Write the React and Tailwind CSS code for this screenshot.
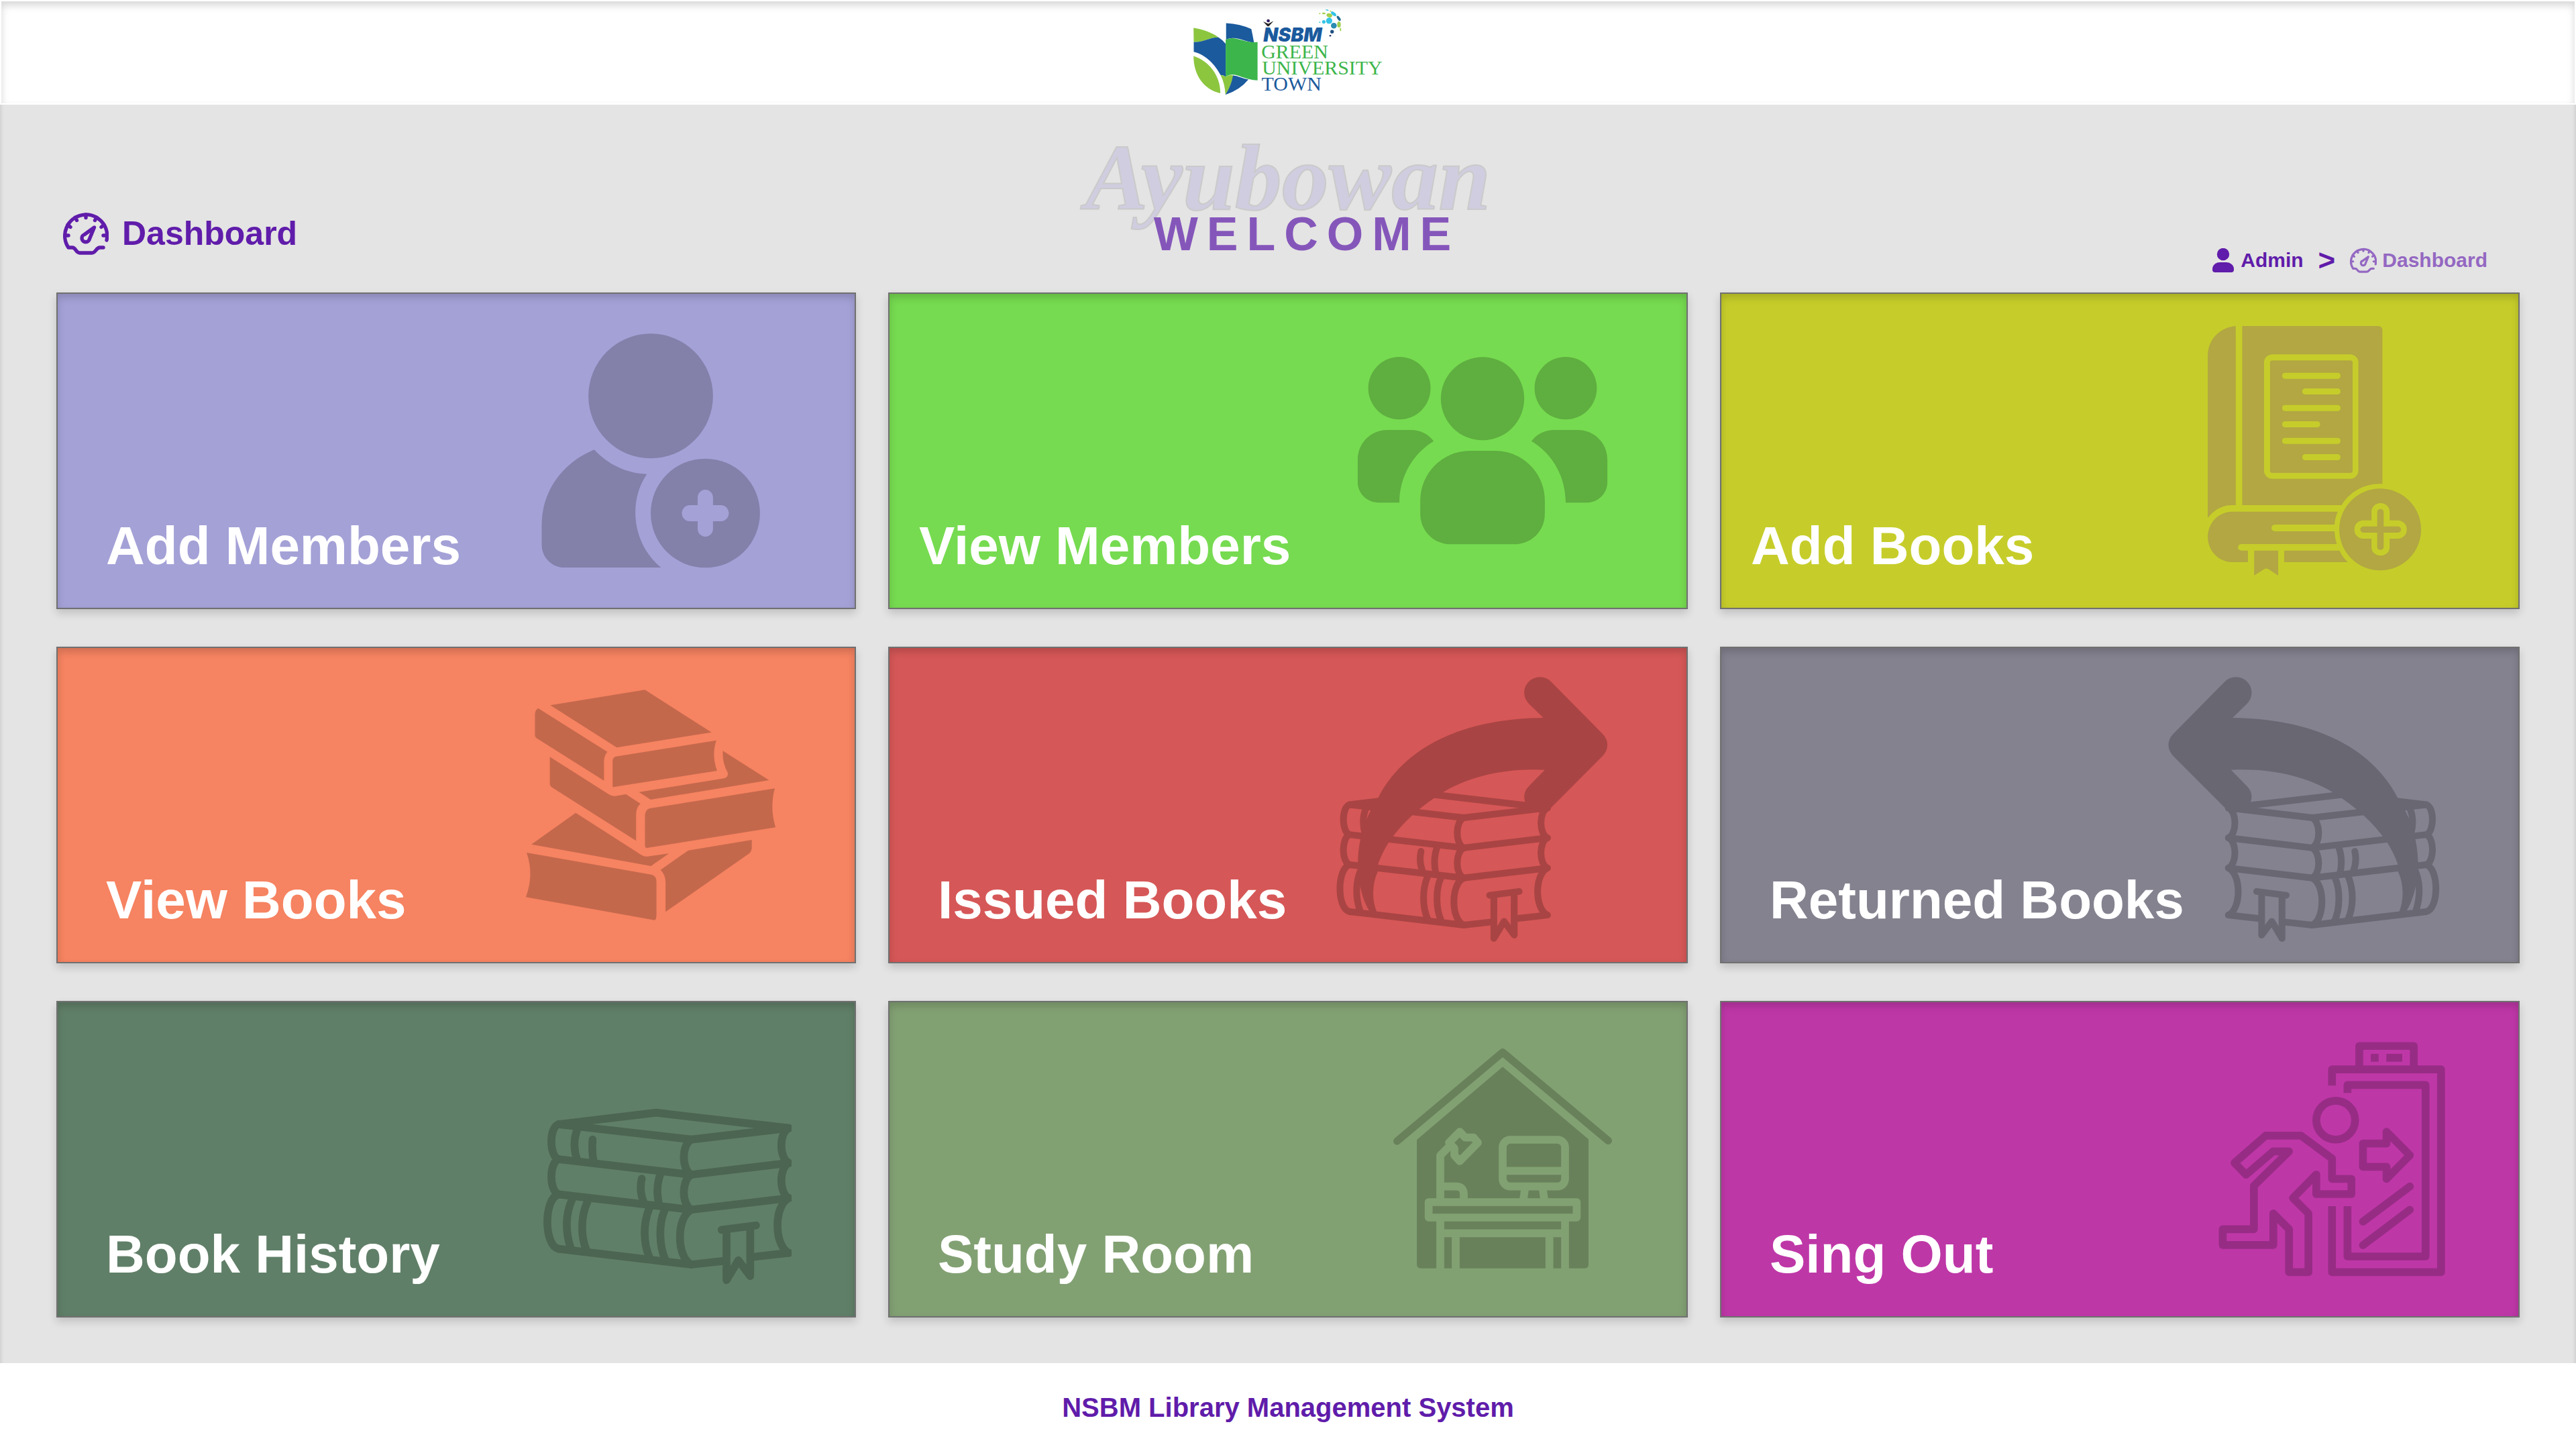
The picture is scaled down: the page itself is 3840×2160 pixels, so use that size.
const GaugeIcon = ({ className }) => (
  <svg
    viewBox="0 0 68 64"
    className={className}
    fill="none"
    stroke="currentColor"
    strokeWidth="5.4"
    strokeLinecap="round"
    strokeLinejoin="round"
    aria-hidden="true"
  >
    <path d="M65 42A31.5 31.5 0 1 0 8 53H14C19 53 19 61 25 61H43C49 61 49 53 55 53H60" />
    <path d="M34 4V8.500M4 35H8M64 35H60M18 8L20.500 12.500M50 8L47.500 12.500M7 19L11 22.500M61 19L57 22.500" />
    <path d="M46.500 23L32 33.500A5.800 5.800 0 1 0 39.500 40Z" />
  </svg>
);

const UserIcon = ({ className }) => (
  <svg viewBox="0 0 32 36" className={className} fill="currentColor" aria-hidden="true">
    <circle cx="16" cy="9" r="9.200" />
    <path d="M11 21H21A11 10 0 0 1 32 31V32Q32 36 28 36H4Q0 36 0 32V31A11 10 0 0 1 11 21Z" />
  </svg>
);

const Logo = () => (
  <svg viewBox="100 30 880 400" className="h-[133px] w-[293px]" role="img" aria-label="NSBM Green University Town">
    <path fill="#8cc63f" d="M115 119C160 125 200 142 228 162C190 160 165 183 116 183Z" />
    <path fill="#1b5a9d" d="M116 183C165 183 190 160 228 162Q245 172 259 190V338Q250 330 236 330C215 290 175 240 116 226Z" />
    <path fill="#8cc63f" d="M115 245C180 265 236 330 235 412C160 395 115 330 115 245Z" />
    <path fill="#1b5a9d" d="M261 98Q325 102 374 124Q380 150 386 185C350 183 300 150 261 172Z" />
    <path fill="#8cc63f" d="M236 330Q250 332 259 338Q275 328 294 332Q285 375 258 419Q256 370 236 330Z" />
    <path fill="#1b5a9d" d="M292 332C320 335 330 345 361 350Q325 395 258 419Q285 375 292 332Z" />
    <path fill="#3cb54b" d="M259 172C300 150 340 187 402 183V354C340 355 300 310 259 338Z" />
    <path fill="#222" d="M427 90L447 112H452L474 88L450 101Z" />
    <circle fill="#2e1a5e" cx="450" cy="87" r="7" />
    <g fill="#35c4e8">
      <circle cx="723" cy="87" r="14" />
      <circle cx="699" cy="92" r="8" />
      <circle cx="681" cy="94" r="3" />
      <ellipse cx="743" cy="56" rx="14" ry="7" transform="rotate(38 743 56)" />
      <ellipse cx="714" cy="39" rx="7" ry="2" transform="rotate(15 714 39)" />
    </g>
    <g fill="#a2cf4f">
      <ellipse cx="724" cy="63" rx="13" ry="9" transform="rotate(15 724 63)" />
      <ellipse cx="699" cy="54" rx="8" ry="4" />
      <circle cx="681" cy="55" r="3" />
      <ellipse cx="767" cy="104" rx="8" ry="14" />
      <ellipse cx="774" cy="126" rx="3" ry="8" />
      <ellipse cx="729" cy="44" rx="5" ry="2" transform="rotate(20 729 44)" />
    </g>
    <circle fill="#2a8cb0" cx="744" cy="109" r="13" />
    <ellipse fill="#236a90" cx="766" cy="76" rx="6" ry="13" transform="rotate(-35 766 76)" />
    <circle fill="#1f4f80" cx="736" cy="136" r="8" />
    <circle fill="#1f2f60" cx="728" cy="154" r="4" />
    <text x="428" y="180" fill="#1b5a9d" className="font-['Inter'] text-[86px] font-black italic">NSBM</text>
    <g className="font-['Liberation_Serif'] text-[90px]">
      <text x="419" y="255" fill="#3cb54b">GREEN</text>
      <text x="422" y="327" fill="#3cb54b">UNIVERSITY</text>
      <text x="420" y="400" fill="#1b5a9d">TOWN</text>
    </g>
  </svg>
);

const AddMemberArt = () => (
  <g transform="translate(26 22) scale(.35714 .33333)" fill="#8380aa">
    <ellipse cx="588" cy="391" rx="260" ry="279" />
    <path d="M352 631C410 698 490 738 572 740C540 790 524 850 524 912C524 1010 565 1100 631 1158H228C175 1158 133 1112 133 1055V970C133 815 220 690 352 631Z" />
    <ellipse cx="816" cy="915" rx="228" ry="244" />
    <g fill="#a4a1d7">
      <rect x="784" y="810" width="64" height="210" rx="32" ry="35" />
      <rect x="718" y="879" width="196" height="72" rx="33" ry="36" />
    </g>
  </g>
);

const MembersArt = () => (
  <g transform="translate(-14 42) scale(.35714 .33333)" fill="#5fae40">
    <ellipse cx="353" cy="296" rx="130" ry="140" />
    <ellipse cx="700" cy="343" rx="174" ry="186" />
    <ellipse cx="1047" cy="296" rx="130" ry="140" />
    <path d="M302 483H404C440 483 475 502 496 533C410 588 353 690 353 808H267C218 808 179 767 179 717V615C179 540 235 483 302 483Z" />
    <path transform="translate(1400 0) scale(-1 1)" d="M302 483H404C440 483 475 502 496 533C410 588 353 690 353 808H267C218 808 179 767 179 717V615C179 540 235 483 302 483Z" />
    <path d="M648 576H752C867 576 960 675 960 800V857C960 933 905 994 832 994H568C495 994 440 933 440 857V800C440 675 533 576 648 576Z" />
  </g>
);

const AddBookArt = () => (
  <g transform="translate(6 12) scale(.3699 .33333)" fill="#b2a742">
    <path d="M305 108V909H290C250 909 215 932 192 967V240C192 165 245 112 305 108Z" />
    <path d="M331 108H880Q896 110 896 126V814H886C820 814 762 852 732 909H331Z" />
    <g fill="#c6cd2a">
      <rect x="419" y="235" width="380" height="556" rx="34" ry="36" />
    </g>
    <rect x="443" y="262" width="333" height="503" rx="10" />
    <g fill="#c6cd2a">
      <rect x="492" y="317" width="235" height="27" rx="12" />
      <rect x="573" y="387" width="154" height="27" rx="12" />
      <rect x="492" y="461" width="235" height="27" rx="12" />
      <rect x="492" y="534" width="153" height="27" rx="12" />
      <rect x="492" y="608" width="235" height="27" rx="12" />
      <rect x="573" y="681" width="154" height="27" rx="12" />
    </g>
    <path d="M290 938H716Q705 965 703 996H463Q449 998 449 1011Q449 1024 463 1026H703Q704 1055 712 1083H328Q314 1085 314 1098Q314 1110 328 1112H354V1164H290C235 1164 192 1112 192 1051S235 938 290 938Z" />
    <path d="M500 1112H723Q735 1142 757 1164H500Z" />
    <path d="M379 1112H476V1224L436 1195Q428 1190 420 1195L379 1224Z" />
    <ellipse cx="887" cy="1018" rx="165" ry="183" />
    <g fill="#c6cd2a">
      <rect x="852" y="900" width="73" height="235" rx="36" ry="38" />
      <rect x="783" y="977" width="211" height="82" rx="36" ry="40" />
    </g>
    <rect x="875" y="926" width="26" height="183" rx="13" />
    <rect x="807" y="1004" width="164" height="28" rx="13" />
  </g>
);

const BookPileArt = () => (
  <g transform="translate(6 14) scale(.35714 .33333)" fill="#c4684c">
    <path d="M225 214L620 145L898 335L502 403Z" />
    <path d="M174 227L463 422Q449 440 449 465V551L166 360Q161 355 161 348V250Q163 235 174 227Z" />
    <path d="M498 443L918 371Q897 435 921 507L487 580Q485 579 485 575V460Q487 446 498 443Z" />
    <path d="M223 445L470 613Q482 621 495 620L541 612L601 654Q583 672 583 702V820L234 583Q223 575 223 565Z" />
    <path d="M945 418L1138 549L644 636L595 602L950 541Q968 535 966 517Q942 470 945 418Z" />
    <path d="M640 675L1162 586Q1140 670 1165 760L628 852Q620 851 620 842V705Q622 680 640 675Z" />
    <path d="M331 695L606 884Q617 892 630 890L720 877L645 933L146 836Z" />
    <path d="M126 873L650 972Q667 978 668 1003V1150Q668 1170 661 1175L123 1072Q158 970 126 873Z" />
    <path d="M801 863L1066 816V855Q1064 868 1056 876L706 1138V1005Q705 970 685 950Z" />
  </g>
);

const StackedBooks = ({ color }) => (
  <g fill="none" stroke={color} strokeWidth="35" strokeLinecap="round" strokeLinejoin="round">
    <path d="M158 228L595 176L1188 245L752 296Z" />
    <path d="M158 384L752 453L1188 401M158 541L752 610L1188 558M158 785L752 855L905 838M1020 822L1188 803" />
    <path d="M158 228C115 240 115 370 158 384C115 400 115 525 158 541C91 560 91 770 158 785" />
    <path d="M752 296C707 320 707 430 752 453C707 477 707 587 752 610C684 640 684 825 752 855" />
    <path d="M1188 245C1143 265 1143 380 1188 401C1143 421 1143 537 1188 558C1120 590 1120 770 1188 803" />
    <path d="M242 250C226 290 226 340 240 385M310 296Q306 350 314 390" />
    <path d="M530 471C522 505 524 540 538 575M612 455C596 500 596 540 608 590" />
    <path d="M218 565C188 630 188 710 212 780M288 572C256 640 256 730 284 795" />
    <path d="M563 605C536 670 536 760 565 825M632 612C606 670 606 770 636 835" />
    <path d="M887 700L1041 680M909 700V925L962 836L1015 907V690" />
  </g>
);

const MovingBooks = ({ color }) => (
  <>
    <g transform="translate(-7.400 168.200) scale(.2863)">
      <StackedBooks color={color} />
    </g>
    <path
      transform="translate(-34 14) scale(.38265 .33333)"
      fill={color}
      d="M300 626C400 405 620 275 942 270L886 207Q868 185 868 158C868 118 896 88 930 88Q955 88 972 108L1174 343Q1192 365 1192 391Q1192 418 1174 440L972 673Q955 692 930 692C892 690 868 660 868 622Q868 597 886 576L948 503C790 493 650 535 553 602C430 690 335 800 298 927C275 1000 265 1070 265 1135C235 1080 220 1000 220 910C222 810 250 710 300 626Z"
    />
  </>
);

const IssuedArt = () => <MovingBooks color="#a94444" />;

const ReturnedArt = () => (
  <g transform="translate(440.600 0) scale(-1 1)">
    <MovingBooks color="#686772" />
  </g>
);

const HistoryArt = () => (
  <g transform="translate(46 106) scale(.33333)">
    <clipPath id="history-edge">
      <rect width="1200" height="1000" />
    </clipPath>
    <g clipPath="url(#history-edge)">
      <StackedBooks color="#4c6552" />
    </g>
  </g>
);

const StudyArt = () => (
  <g transform="translate(66 36) scale(.33333)" strokeLinejoin="round">
    <path d="M128 513L600 116L1072 511" fill="none" stroke="#69815b" strokeWidth="34" strokeLinecap="round" />
    <path d="M600 181L984 505V1065Q984 1082 966 1082H234Q216 1082 216 1065V507Z" fill="#69815b" />
    <g fill="none" stroke="#82a173" strokeWidth="35">
      <path d="M360 520L408 471L432 497H470L489 520L408 603L384 577V545Z" />
      <path d="M360 538L321 577V785M321 716H395Q426 718 426 750V785" />
      <rect x="600" y="507" width="279" height="209" rx="34" />
      <path d="M600 646H879M700 725L692 780M779 725L787 780" />
      <rect x="269" y="786" width="662" height="69" />
      <path d="M321 860V1084M879 860V1084M390 925V1084M809 925V1084M321 925H879" />
    </g>
  </g>
);

const ExitArt = () => (
  <g transform="translate(46 26) scale(.34439)" fill="none" stroke="#972c85" strokeWidth="34" strokeLinejoin="round">
    <path d="M746 215V114H982V215" />
    <path d="M628 285V215H1100V1093H628V807" />
    <path d="M695 317V283H1033V1025H695V807" />
    <g fill="#972c85" stroke="none">
      <rect x="796" y="148" width="34" height="34" />
      <rect x="863" y="148" width="69" height="34" />
    </g>
    <circle cx="644" cy="435" r="84" />
    <path d="M762 536H864V485L965 587L864 689V637H762Z" />
    <path d="M762 874L965 722M762 976L965 823" strokeLinecap="round" />
    <path d="M341 502H494L628 601V689H712V755H560V670L459 772L526 839V1093H442V907L374 839V975H155V907H290V719L442 570H374L256 671L206 620Z" />
  </g>
);

const cards = [
  { title: "Add Members", bg: "bg-[#a4a1d7]", pad: "pl-18", Art: AddMemberArt },
  { title: "View Members", bg: "bg-[#76db50]", pad: "pl-11", Art: MembersArt },
  { title: "Add Books", bg: "bg-[#c6cd2a]", pad: "pl-11", Art: AddBookArt },
  { title: "View Books", bg: "bg-[#f68361]", pad: "pl-18", Art: BookPileArt },
  { title: "Issued Books", bg: "bg-[#d65757]", pad: "pl-18", Art: IssuedArt },
  { title: "Returned Books", bg: "bg-[#84828f]", pad: "pl-18", Art: ReturnedArt },
  { title: "Book History", bg: "bg-[#607f68]", pad: "pl-18", Art: HistoryArt },
  { title: "Study Room", bg: "bg-[#82a173]", pad: "pl-18", Art: StudyArt },
  { title: "Sing Out", bg: "bg-[#be37a7]", pad: "pl-18", Art: ExitArt },
];

const Card = ({ title, bg, pad, Art }) => (
  <a
    href="#"
    className={`grid h-118 overflow-hidden border-2 border-[#707070] shadow-[0_6px_12px_#00000029,inset_0_6px_12px_#00000029] *:col-start-1 *:row-start-1 ${bg}`}
  >
    <svg viewBox="0 0 540 468" className="h-[468px] w-[540px] justify-self-end" aria-hidden="true">
      <Art />
    </svg>
    <h3 className={`self-end pb-13 text-[80px] leading-20 font-bold text-white ${pad}`}>{title}</h3>
  </a>
);

export default function App() {
  return (
    <div className="flex min-h-screen flex-col bg-[#e4e4e4] font-['Liberation_Sans',Arial,sans-serif] text-[#601caa]">
      <header className="flex h-39 justify-center border-2 border-white bg-white pt-2.5 shadow-[inset_0_6px_12px_#00000029]">
        <Logo />
      </header>

      <main className="flex-1 px-21 pb-17 shadow-[inset_6px_0_6px_-6px_#00000029,inset_-6px_0_6px_-6px_#00000029]">
        <div className="grid h-70 grid-cols-3 items-end">
          <div className="flex items-center gap-5 pb-14 pl-2.5">
            <GaugeIcon className="h-16 w-17" />
            <h1 className="text-[50px] leading-16 font-bold">Dashboard</h1>
          </div>

          <div className="flex flex-col items-center self-start pt-10">
            <p className="font-['Liberation_Serif',serif] text-[140px] leading-[138px] font-bold text-[#d1cde0] italic [-webkit-text-stroke:2px_#cacaca]">
              Ayubowan
            </p>
            <h2 className="-mt-5 pl-14 text-[70px] leading-[70px] font-bold tracking-[13px] text-[#8556ba]">WELCOME</h2>
          </div>

          <nav aria-label="Breadcrumb" className="flex items-center justify-end pr-12 pb-7 text-[30px] leading-10 font-bold">
            <a href="#" className="flex items-center gap-2.5">
              <UserIcon className="h-9 w-8" />
              Admin
            </a>
            <span className="px-5.5 text-[44px]">&gt;</span>
            <a href="#" className="flex items-center gap-2 text-[#9468c2]">
              <GaugeIcon className="h-[38px] w-10" />
              Dashboard
            </a>
          </nav>
        </div>

        <div className="grid grid-cols-3 gap-x-12 gap-y-14">
          {cards.map((card) => (
            <Card key={card.title} {...card} />
          ))}
        </div>
      </main>

      <footer className="flex h-32 items-center justify-center bg-white pt-1 text-[40px] font-bold">
        <p>NSBM Library Management System</p>
      </footer>
    </div>
  );
}
